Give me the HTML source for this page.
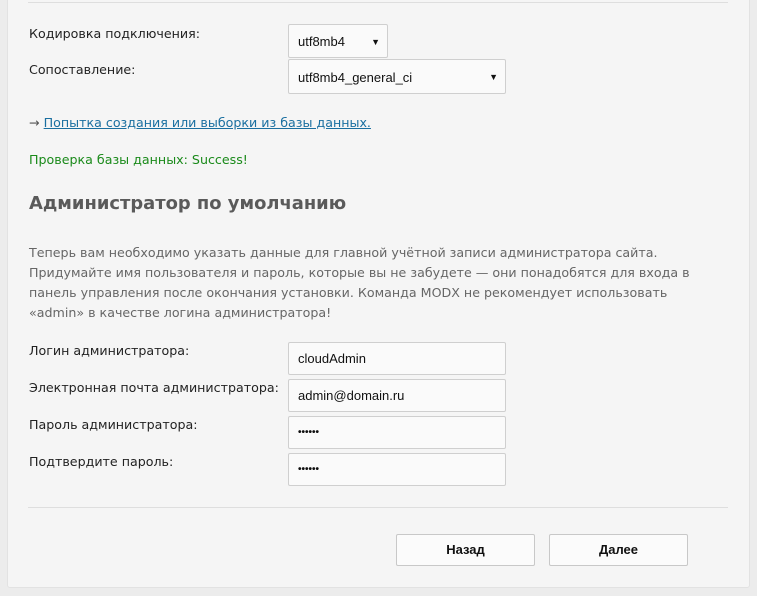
<!DOCTYPE html>
<html><head><meta charset="utf-8"><style>
body{margin:0;width:757px;height:596px;background:#ececec;font-family:"DejaVu Sans","Liberation Sans",sans-serif;font-size:12.65px;color:#222;position:relative;overflow:hidden}
.panel{position:absolute;left:7px;top:-5px;width:741px;height:591px;background:#f5f5f5;border:1px solid #e2e2e2;border-radius:3px}
.abs{position:absolute;white-space:nowrap}
.hr{position:absolute;left:28px;width:700px;height:1px;background:#dedede}
.box{position:absolute;background:#fafafa;border:1px solid #cfcfcf;border-radius:2px;box-sizing:border-box;font-family:"Liberation Sans",Arial,sans-serif;font-size:13px;color:#111;padding-left:9px}
.arr{position:absolute;right:7px;font-size:9px}
.btn{position:absolute;top:534px;width:139px;height:32px;background:#fbfbfb;border:1px solid #c8c8c8;border-radius:2px;box-sizing:border-box;font-family:"Liberation Sans",Arial,sans-serif;font-weight:bold;font-size:13px;text-align:center;line-height:30px;color:#111}
</style></head><body>
<div class="panel"></div>
<div class="hr" style="top:2px"></div>
<div class="abs" style="left:29px;top:26px">Кодировка подключения:</div>
<div class="abs" style="left:29px;top:62px">Сопоставление:</div>
<div class="box" style="left:288px;top:24px;width:100px;height:34px;line-height:34px">utf8mb4<span class="arr">▼</span></div>
<div class="box" style="left:288px;top:59px;width:218px;height:35px;line-height:35px">utf8mb4_general_ci<span class="arr">▼</span></div>
<div class="abs" style="left:29px;top:115px;color:#555">→ <span style="color:#1a6fa0;text-decoration:underline">Попытка создания или выборки из базы данных.</span></div>
<div class="abs" style="left:29px;top:152px;color:#1a8a1a">Проверка базы данных: Success!</div>
<div class="abs" style="left:29px;top:193px;font-size:17.9px;font-weight:bold;color:#5a5a5a">Администратор по умолчанию</div>
<div class="abs" style="left:29px;top:243px;color:#666;line-height:20px">Теперь вам необходимо указать данные для главной учётной записи администратора сайта.<br>Придумайте имя пользователя и пароль, которые вы не забудете — они понадобятся для входа в<br>панель управления после окончания установки. Команда MODX не рекомендует использовать<br>«admin» в качестве логина администратора!</div>
<div class="abs" style="left:29px;top:343px">Логин администратора:</div>
<div class="abs" style="left:29px;top:380px">Электронная почта администратора:</div>
<div class="abs" style="left:29px;top:417px">Пароль администратора:</div>
<div class="abs" style="left:29px;top:454px">Подтвердите пароль:</div>
<div class="box" style="left:288px;top:342px;width:218px;height:33px;line-height:31px">cloudAdmin</div>
<div class="box" style="left:288px;top:379px;width:218px;height:33px;line-height:31px">admin@domain.ru</div>
<div class="box" style="left:288px;top:416px;width:218px;height:33px;line-height:31px;font-size:10px;font-weight:bold">••••••</div>
<div class="box" style="left:288px;top:453px;width:218px;height:33px;line-height:31px;font-size:10px;font-weight:bold">••••••</div>
<div class="hr" style="top:507px"></div>
<div class="btn" style="left:396px">Назад</div>
<div class="btn" style="left:549px">Далее</div>
</body></html>
